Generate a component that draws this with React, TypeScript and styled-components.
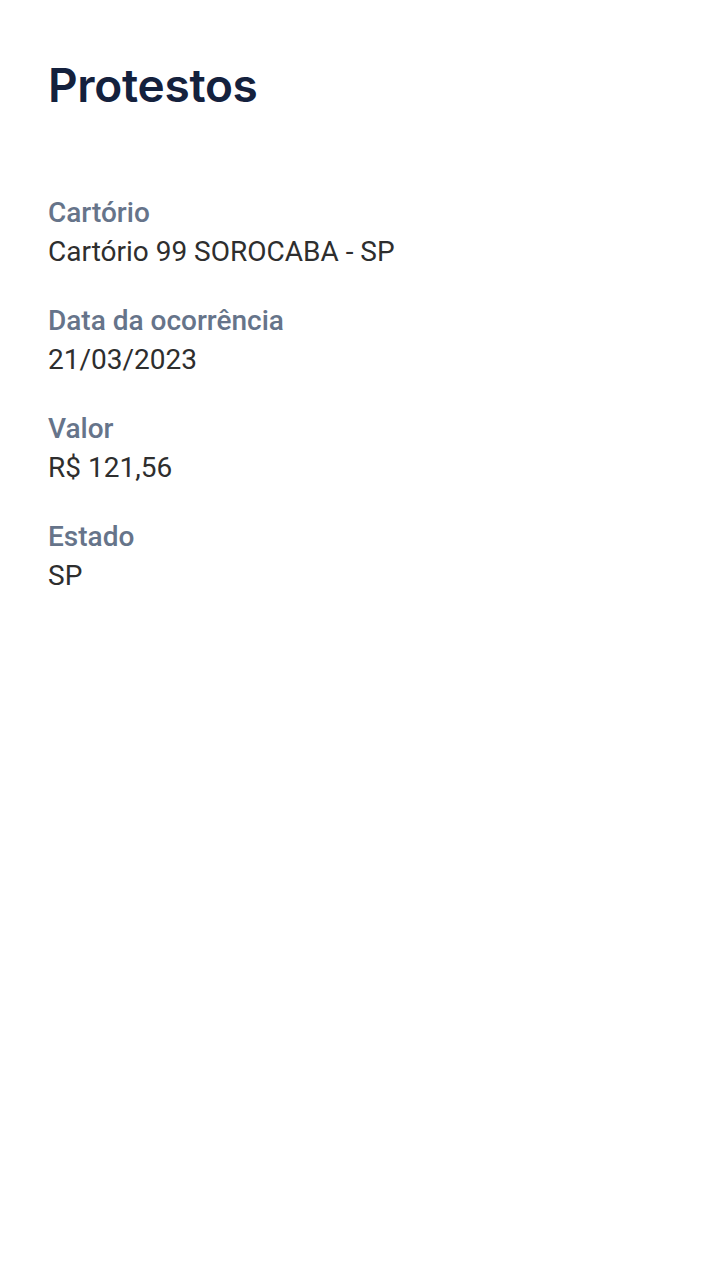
import React from 'react';
import styled, { createGlobalStyle } from 'styled-components';

const GlobalStyle = createGlobalStyle`
  html, body {
    margin: 0;
    padding: 0;
    background: #fff;
  }
`;

const Page = styled.main`
  box-sizing: border-box;
  width: 720px;
  min-height: 1285px;
  padding: 55px 48px 0;
  background: #fff;
`;

const Title = styled.h1`
  margin: 0 0 79px;
  font-family: Inter, 'Noto Sans', sans-serif;
  font-size: 46px;
  font-weight: 600;
  line-height: 60px;
  color: #14213d;
  letter-spacing: -0.3px;
`;

const Fields = styled.dl`
  display: flex;
  flex-direction: column;
  gap: 31px;
  margin: 0;
`;

const Field = styled.div`
  display: flex;
  flex-direction: column;
`;

const Label = styled.dt`
  font-family: Roboto, 'Liberation Sans', sans-serif;
  font-size: 28px;
  font-weight: 500;
  line-height: 38px;
  color: #66748a;
`;

const Value = styled.dd`
  margin: 1px 0 0;
  font-family: Roboto, 'Liberation Sans', sans-serif;
  font-size: 28px;
  font-weight: 400;
  line-height: 38px;
  color: #2e2e2e;
`;

const fields = [
  { label: 'Cartório', value: 'Cartório 99 SOROCABA - SP' },
  { label: 'Data da ocorrência', value: '21/03/2023' },
  { label: 'Valor', value: 'R$ 121,56' },
  { label: 'Estado', value: 'SP' },
];

const App = (): React.ReactElement => {
  return (
    <>
      <GlobalStyle />
      <Page>
        <Title>Protestos</Title>
        <Fields>
          {fields.map((f) => (
            <Field key={f.label}>
              <Label>{f.label}</Label>
              <Value>{f.value}</Value>
            </Field>
          ))}
        </Fields>
      </Page>
    </>
  );
};

export default App;
